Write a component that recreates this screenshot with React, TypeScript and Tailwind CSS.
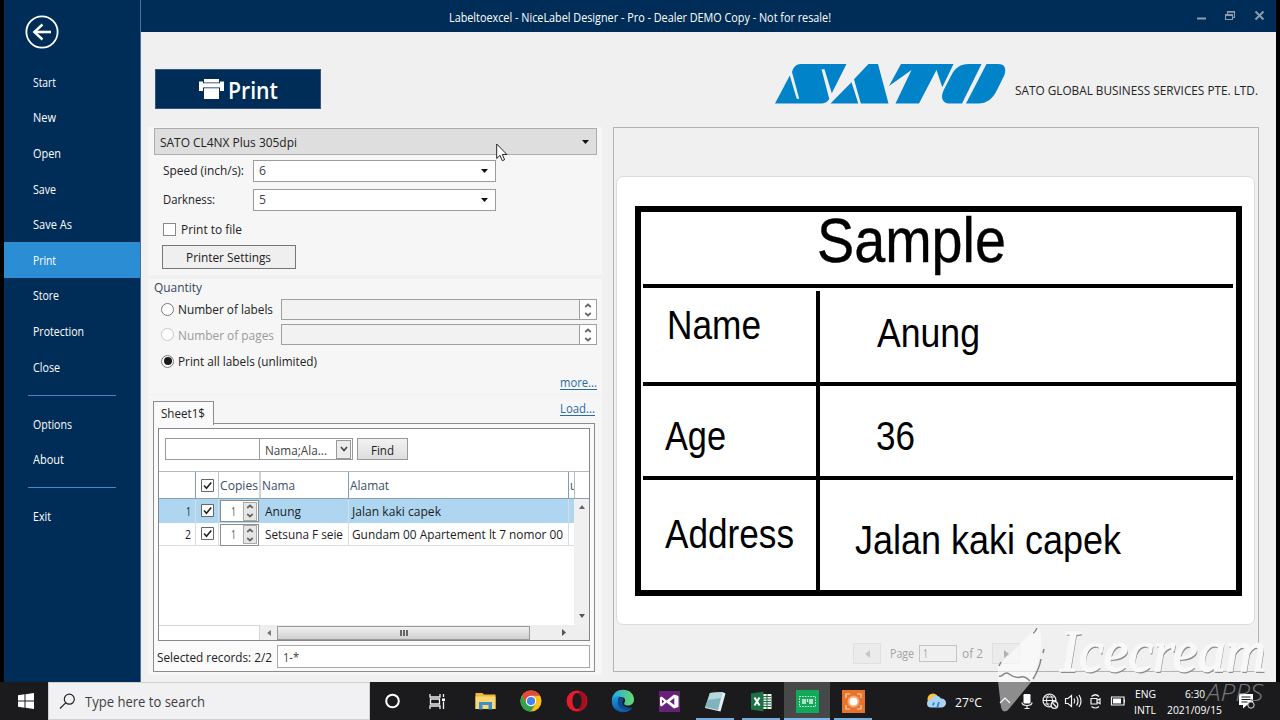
import { useLayoutEffect, useRef, useState } from "react";
import type { ReactNode } from "react";

type FitProps = { w: number; children: string; className?: string; underline?: boolean };

/* A single line of text condensed or widened to an exact width. */
function Fit({ w, children, className = "", underline = false }: FitProps) {
  const ref = useRef<HTMLSpanElement>(null);
  const [scale, setScale] = useState(1);
  useLayoutEffect(() => {
    const el = ref.current;
    if (!el) return;
    el.style.transform = "none";
    const next = w / el.getBoundingClientRect().width;
    el.style.transform = `scaleX(${next})`;
    setScale(next);
  }, [w, children]);
  return (
    <span className={`inline-block shrink-0 whitespace-nowrap ${className}`} style={{ width: w }}>
      <span
        ref={ref}
        className={`inline-block origin-left ${underline ? "underline underline-offset-2" : ""}`}
        style={{ transform: `scaleX(${scale})` }}
      >
        {children}
      </span>
    </span>
  );
}

function NavItem({ label, w, active = false }: { label: string; w: number; active?: boolean }) {
  return (
    <div
      className={`flex h-[35.6px] shrink-0 items-center pt-[1.500px] pl-[29px] text-[12px] text-white ${active ? "bg-[#2b8dd4]" : ""}`}
    >
      <Fit w={w}>{label}</Fit>
    </div>
  );
}

function Rule() {
  return <div className="mt-[10px] mb-[10.500px] ml-[24px] h-px w-[88px] shrink-0 bg-[#4a86c4]" />;
}

function Sidebar() {
  return (
    <nav className="ml-[4px] flex w-[136px] shrink-0 flex-col bg-[#002d57]">
      <div className="h-[64.3px] shrink-0 pt-[15px] pl-[21px]">
        <svg width="34" height="34" viewBox="0 0 34 34" fill="none" stroke="#fff">
          <circle cx="17" cy="17" r="15.6" strokeWidth="1.8" />
          <path d="M26 17H9.5" strokeWidth="2.6" />
          <path d="M17.5 9.5 9.3 17l8.2 7.5" strokeWidth="2.4" />
        </svg>
      </div>
      <NavItem label="Start" w={23} />
      <NavItem label="New" w={23} />
      <NavItem label="Open" w={28} />
      <NavItem label="Save" w={23} />
      <NavItem label="Save As" w={39} />
      <NavItem label="Print" w={23} active />
      <NavItem label="Store" w={26} />
      <NavItem label="Protection" w={51} />
      <NavItem label="Close" w={27} />
      <Rule />
      <NavItem label="Options" w={39} />
      <NavItem label="About" w={31} />
      <Rule />
      <NavItem label="Exit" w={18} />
    </nav>
  );
}

function TitleBar() {
  return (
    <header className="flex h-[32px] shrink-0 items-center bg-[#002d57] pt-[3px] pl-[308px] text-[12px] text-white">
      <Fit w={382}>Labeltoexcel - NiceLabel Designer - Pro - Dealer DEMO Copy - Not for resale!</Fit>
      <svg className="mt-[-4px] mr-[10px] ml-auto" width="70" height="14" viewBox="0 0 70 14" fill="none" stroke="#8b9db0">
        <path d="M1 9.5h9" strokeWidth="2" />
        <path d="M29.5 5.5h7v5h-7zM29.5 6.5h7M31.5 5V2.5h7v6h-2M31.5 3.2h7" strokeWidth="1.1" />
        <path d="m59.5 2.5 8 8m0-8-8 8" strokeWidth="1.9" />
      </svg>
    </header>
  );
}

function SatoLogo() {
  return (
    <svg width="231" height="40" viewBox="0 0 231 40" fill="#0083c8">
      <path d="M0 39.5 14.8 11.5 21.700 34.700h2.500L17 8l1-3C20 1.500 22.500 0 26 0H71.500L56.800 29.300 49.500 5.300h-3L54.300 35c-2 3-5 4.500-8 4.500z" />
      <path d="M55.500 39.500 76.500 18.300 83.300 39.500z" />
      <path d="m79 15.300 14.500-15.300H103l10.500 39.500H85.800z" />
      <path d="M114 22 126 0h52.500L167.300 23.300 161.500 6 144 39.500h-23.500L136.500 6z" />
      <path d="M206.500 0h-13c-8 0-13 3.500-17 11l-8 15.500c-3.500 7.500-.5 13 5.500 13h13z" />
      <path d="M211.500 0h12c7 0 8 6 5.500 12l-7 14c-4.500 9-10.500 13.500-18.500 13.500h-12.500z" />
    </svg>
  );
}

function Header() {
  return (
    <div className="flex h-[95px] shrink-0 items-start pl-[14px]">
      <div className="mt-[37px] flex h-[40px] w-[166px] items-center border border-[#34567e] bg-[#002d57] pl-[43px] text-[23.500px] font-semibold text-white">
        <svg width="25" height="20" viewBox="0 0 25 20" fill="#fff">
          <path d="M5 0h15v3.500H5z" />
          <path d="M0 2.500h4v2h17v-2h4V12h-4V8.200H4V12H0z" />
          <path d="M4 4.500h17v3.700H4zM5 9.200h15V20H5z" />
        </svg>
        <Fit w={50} className="mt-px ml-[4px]">Print</Fit>
      </div>
      <div className="mt-[32px] ml-auto mr-[18px] flex gap-[9px]">
        <SatoLogo />
        <Fit w={243} className="mt-[18px] text-[12px] leading-[18px] text-[#222]">
          SATO GLOBAL BUSINESS SERVICES PTE. LTD.
        </Fit>
      </div>
    </div>
  );
}

function Caret({ className = "" }: { className?: string }) {
  return (
    <svg className={`ml-auto ${className}`} width="7" height="4" viewBox="0 0 7 4" fill="#111">
      <path d="M0 0h7L3.500 4z" />
    </svg>
  );
}

function SettingRow({ label, w, value, className }: { label: string; w: number; value: string; className: string }) {
  return (
    <div className={`flex h-[21px] items-center pl-[9px] ${className}`}>
      <div className="flex w-[90px] pt-px">
        <Fit w={w}>{label}</Fit>
      </div>
      <div className="flex h-[22px] w-[243px] items-center border border-[#9c9c9c] bg-white pl-[5px] text-[#444]">
        <Fit w={7} className="mt-px">{value}</Fit>
        <Caret className="mr-[7px]" />
      </div>
    </div>
  );
}

function PrinterSection() {
  return (
    <section className="h-[148px] bg-[#f6f6f6] pt-px pl-[6px]">
      <div className="flex h-[27px] w-[443px] items-center border border-[#adadad] bg-[#dedede] pt-[2px] pl-[5px]">
        <Fit w={137}>SATO CL4NX Plus 305dpi</Fit>
        <Caret className="mr-[7px] mb-[2px]" />
      </div>
      <SettingRow className="mt-[5px]" label="Speed (inch/s):" w={81} value="6" />
      <SettingRow className="mt-[8px]" label="Darkness:" w={52} value="5" />
      <div className="mt-[12px] flex h-[14px] items-center pl-[9px]">
        <div className="mr-[5px] h-[13px] w-[13px] border border-[#8a8a8a] bg-white" />
        <Fit w={61} className="pt-[2px]">Print to file</Fit>
      </div>
      <div className="mt-[9px] ml-[8px] flex h-[24px] w-[134px] items-center border border-[#777] bg-[#efefef] pt-px pl-[23px]">
        <Fit w={85}>Printer Settings</Fit>
      </div>
    </section>
  );
}

function Radio({ on = false, dim = false }: { on?: boolean; dim?: boolean }) {
  return (
    <div
      className={`mr-[4px] ml-[7px] flex h-[13px] w-[13px] shrink-0 items-center justify-center rounded-full border bg-white ${dim ? "border-[#c8c8c8]" : "border-[#7a7a7a]"}`}
    >
      {on && <div className="h-[8px] w-[8px] rounded-full bg-[#1a1a1a]" />}
    </div>
  );
}

function SpinArrows() {
  return (
    <svg width="8" height="14" viewBox="0 0 8 14" fill="none" stroke="#666" strokeWidth="1.700">
      <path d="M1.200 4 4 1.500 6.800 4M1.200 10 4 12.500 6.800 10" />
    </svg>
  );
}

function QuantityField() {
  return (
    <div className="ml-auto flex h-[21px] w-[316px] border border-[#a0a0a0] bg-[#f2f2f2]">
      <div className="ml-auto flex w-[17px] items-center justify-center border-l border-[#a0a0a0] bg-white">
        <SpinArrows />
      </div>
    </div>
  );
}

function QuantitySection() {
  return (
    <section className="mt-[4px] h-[115px] bg-[#f6f6f6] pr-[5px] pl-[6px]">
      <div className="flex h-[16px] items-center pt-[2px] text-[#33475b]">
        <Fit w={48}>Quantity</Fit>
      </div>
      <div className="mt-[4px] flex h-[21px] items-center">
        <Radio />
        <Fit w={95} className="pt-px">Number of labels</Fit>
        <QuantityField />
      </div>
      <div className="mt-[4px] flex h-[21px] items-center text-[#9b9b9b]">
        <Radio dim />
        <Fit w={96} className="pt-[3px]">Number of pages</Fit>
        <QuantityField />
      </div>
      <div className="mt-[3px] flex h-[26px] items-center">
        <Radio on />
        <Fit w={139} className="pt-[2px]">Print all labels (unlimited)</Fit>
      </div>
      <div className="flex h-[17px] items-center justify-end text-[#2a6aa8]">
        <Fit w={37} underline>more...</Fit>
      </div>
    </section>
  );
}

function Check() {
  return (
    <svg width="13" height="13" viewBox="0 0 13 13" fill="none">
      <path d="M.5.500h12v12H.500z" fill="#fff" stroke="#666" />
      <path d="m3 6.500 2.500 2.700L10.200 3.500" stroke="#222" strokeWidth="1.600" />
    </svg>
  );
}

type RecordRowProps = { n: string; nw: number; name: string; nameW: number; address: string; addressW: number; selected?: boolean };

function RecordRow({ n, nw, name, nameW, address, addressW, selected = false }: RecordRowProps) {
  return (
    <div
      className={`flex h-[23.500px] w-[415px] text-[12.500px] text-[#1c1c1c] ${selected ? "bg-[#aed6f1] leading-[25px]" : "border-b border-[#dcdcdc] bg-white leading-[24px]"}`}
    >
      <div className="flex w-[37px] justify-end border-r border-[#d5dce2] pr-[4px]">
        <Fit w={nw}>{n}</Fit>
      </div>
      <div className="flex w-[23px] items-center justify-center border-r border-[#d5dce2]">
        <Check />
      </div>
      <div className="flex w-[42px] pt-px pl-px">
        <div className="flex h-[22px] w-[39px] items-center border border-[#8d8d8d] bg-white pl-[10px] text-[#555]">
          <Fit w={5}>1</Fit>
          <div className="mr-px ml-auto flex h-[19px] w-[14px] items-center justify-center border border-[#aaa] bg-[#e6e6e6]">
            <SpinArrows />
          </div>
        </div>
      </div>
      <div className="w-[88px] border-r border-[#d5dce2] pl-[4px]">
        <Fit w={nameW}>{name}</Fit>
      </div>
      <div className="w-[220px] border-r border-[#d5dce2] pl-[3px]">
        <Fit w={addressW}>{address}</Fit>
      </div>
    </div>
  );
}

function RecordsGrid() {
  return (
    <div className="h-[213px] w-[432px] border border-[#828790] bg-white">
      <div className="flex h-[42px] pt-[9px] pl-[6px]">
        <div className="h-[22px] w-[95px] border border-[#999]" />
        <div className="flex h-[22px] w-[93px] items-center border border-l-0 border-[#999] pr-px pl-[5px] text-[#444]">
          <Fit w={62} className="pt-[3px]">Nama;Ala...</Fit>
          <div className="ml-auto flex h-[19px] w-[15px] items-center justify-center border border-[#999] bg-[#ececec]">
            <svg width="8" height="6" viewBox="0 0 8 6" fill="none" stroke="#444" strokeWidth="1.600">
              <path d="m1 1 3 3.500L7 1" />
            </svg>
          </div>
        </div>
        <div className="ml-[4px] flex h-[22px] w-[51px] items-center border border-[#999] bg-linear-to-b from-[#f2f2f2] to-[#dedede] pt-[3px] pl-[13px]">
          <Fit w={23}>Find</Fit>
        </div>
      </div>
      <div className="flex h-[28px] border-t border-b border-t-[#b9b9b9] border-b-[#8aa0b4] text-[#3a5068]">
        <div className="w-[37px] border-r border-[#7f9db9]" />
        <div className="flex w-[23px] items-center justify-center border-r border-[#bcc6d0]">
          <Check />
        </div>
        <div className="flex w-[42px] items-center border-r-2 border-[#ccd2d8] pt-[2px] pl-px">
          <Fit w={38}>Copies</Fit>
        </div>
        <div className="flex w-[88px] items-center border-r border-[#7f9db9] pt-[2px] pl-px">
          <Fit w={33}>Nama</Fit>
        </div>
        <div className="flex w-[220px] items-center border-r border-[#7f9db9] pt-[2px] pl-px">
          <Fit w={39}>Alamat</Fit>
        </div>
        <div className="flex w-[6px] items-center overflow-hidden border-r border-[#b4bcc4] pt-[2px] pl-px">
          <Fit w={7}>u</Fit>
        </div>
      </div>
      <div className="flex h-[126px]">
        <div className="w-[415px]">
          <RecordRow n="1" nw={5} name="Anung" nameW={36} address="Jalan kaki capek" addressW={89} selected />
          <RecordRow n="2" nw={6} name="Setsuna F seie" nameW={78} address="Gundam 00 Apartement lt 7 nomor 00" addressW={211} />
        </div>
        <div className="flex w-[15px] flex-col items-center justify-between bg-[#f0f0f0] pt-[6px] pb-[7px]">
          <svg width="6" height="4" viewBox="0 0 6 4" fill="#666"><path d="M0 4h6L3 0z" /></svg>
          <svg width="6" height="4" viewBox="0 0 6 4" fill="#555"><path d="M0 0h6L3 4z" /></svg>
        </div>
      </div>
      <div className="flex h-[15px] items-center bg-[#eee] pr-[23px]">
        <div className="h-[15px] w-[101px] border-t border-r border-[#d6d6d6] bg-white" />
        <svg className="mr-[6px] ml-[7px]" width="4" height="6" viewBox="0 0 4 6" fill="#777"><path d="M4 0v6L0 3z" /></svg>
        <div className="flex h-[14px] w-[253px] items-center justify-center gap-px border border-[#9b9b9b] bg-linear-to-b from-[#f1f1f1] to-[#cfcfcf]">
          <div className="h-[6px] w-[2px] bg-[#666]" />
          <div className="h-[6px] w-[2px] bg-[#666]" />
          <div className="h-[6px] w-[2px] bg-[#666]" />
        </div>
        <svg className="ml-auto" width="4" height="7" viewBox="0 0 4 7" fill="#555"><path d="M0 0v7l4-3.500z" /></svg>
      </div>
    </div>
  );
}

function DataSection() {
  return (
    <section className="mt-px h-[280px] bg-[#f6f6f6] pt-[6px] pl-[5px]">
      <div className="flex h-[22px] w-[442px]">
        <div className="z-10 flex h-[24px] w-[61px] items-center border border-b-0 border-[#8c8c8c] bg-[#fafafa] pl-[7px]">
          <Fit w={44}>Sheet1$</Fit>
        </div>
        <Fit w={35} underline className="ml-auto mt-[-1px] leading-[18px] text-[#2a6aa8]">Load...</Fit>
      </div>
      <div className="h-[249px] w-[442px] border border-[#8c8c8c] bg-[#fafafa] p-[4px]">
        <RecordsGrid />
        <div className="mt-[4px] flex h-[23px] w-[432px] items-center">
          <Fit w={115} className="-ml-px pt-[2px]">Selected records: 2/2</Fit>
          <div className="ml-auto flex h-[23px] w-[313px] items-center border border-[#a8a8a8] bg-white pt-[2px] pl-[5px] text-[#444]">
            <Fit w={16}>1-*</Fit>
          </div>
        </div>
      </div>
    </section>
  );
}

/* The printed label: a free canvas whose objects sit at their designed positions. */
function LabelCanvas() {
  return (
    <div className="relative h-[449px] w-[639px] rounded-[7px] border border-[#dcdcdc] bg-white font-['Liberation_Sans',Arial,sans-serif] text-black">
      <div className="absolute top-[29px] left-[17.500px] h-[390px] w-[607px] border-6 border-black" />
      <div className="absolute top-[107px] left-[26px] h-[4px] w-[590px] bg-black" />
      <div className="absolute top-[205px] left-[26px] h-[4px] w-[595px] bg-black" />
      <div className="absolute top-[299px] left-[26px] h-[4px] w-[590px] bg-black" />
      <div className="absolute top-[114px] left-[199px] h-[302px] w-[4px] bg-black" />
      <Fit w={189} className="absolute top-[31px] left-[200px] text-[63px] leading-[64px] [-webkit-text-stroke:0.4px_#000]">Sample</Fit>
      <Fit w={94} className="absolute top-[128px] left-[49.500px] text-[40px] leading-[40px]">Name</Fit>
      <Fit w={103} className="absolute top-[136px] left-[259.500px] text-[40px] leading-[40px]">Anung</Fit>
      <Fit w={61} className="absolute top-[239px] left-[47.500px] text-[40px] leading-[40px]">Age</Fit>
      <Fit w={39} className="absolute top-[239px] left-[259px] text-[40px] leading-[40px]">36</Fit>
      <Fit w={129} className="absolute top-[337px] left-[47.500px] text-[40px] leading-[40px]">Address</Fit>
      <Fit w={266} className="absolute top-[343px] left-[237.500px] text-[40px] leading-[40px]">Jalan kaki capek</Fit>
    </div>
  );
}

function PagerButton({ children }: { children: ReactNode }) {
  return (
    <div className="flex h-[21px] w-[28px] items-center justify-center border border-[#e0e0e0] bg-[#ebebeb]">{children}</div>
  );
}

function Preview() {
  return (
    <section className="ml-[11px] flex h-[545px] w-[646px] flex-col border border-[#b4b4b4] pt-[48px] pl-[2px]">
      <LabelCanvas />
      <div className="mt-[18px] ml-[237px] flex h-[21px] items-center text-[12.500px] text-[#a3a3a3]">
        <PagerButton>
          <svg width="5" height="8" viewBox="0 0 5 8" fill="#c6c6c6"><path d="M5 0v8L0 4z" /></svg>
        </PagerButton>
        <Fit w={24} className="mt-px ml-[9px]">Page</Fit>
        <div className="mr-[5px] ml-[5px] flex h-[17px] w-[38px] items-center border border-[#c4c4c4] pl-[3px]">
          <Fit w={5}>1</Fit>
        </div>
        <Fit w={21} className="mt-px mr-[9px]">of 2</Fit>
        <PagerButton>
          <svg width="5" height="8" viewBox="0 0 5 8" fill="#b0b0b0"><path d="M0 0v8l5-4z" /></svg>
        </PagerButton>
      </div>
    </section>
  );
}

function Task({ children, open = false, active = false }: { children: ReactNode; open?: boolean; active?: boolean }) {
  return (
    <div className={`flex h-[38px] w-[46px] shrink-0 flex-col items-center justify-end ${active ? "bg-[#474948]" : ""}`}>
      <div className="flex h-[36px] items-center justify-center pt-[2px]">{children}</div>
      <div className={`h-[2px] ${active ? "w-[46px] bg-[#7fb8e6]" : open ? "w-[38px] bg-[#76addb]" : ""}`} />
    </div>
  );
}

function TaskIcons() {
  return (
    <div className="flex">
      <Task>
        <svg width="16" height="16" viewBox="0 0 16 16" fill="none"><circle cx="7.500" cy="8" r="6.300" stroke="#fff" strokeWidth="2" /></svg>
      </Task>
      <Task>
        <svg className="mr-[3px]" width="17" height="17" viewBox="0 0 17 17" fill="none" stroke="#f0f0f0" strokeWidth="1.300">
          <path d="M1 1v3h10V1M1 16v-3h10v3M1.500 6h9v5h-9zM14.500 1v3M14.500 8.500V16" />
          <path d="M13 5.500h3v2.500h-3z" fill="#fff" stroke="none" />
        </svg>
      </Task>
      <Task>
        <svg width="21" height="18" viewBox="0 0 21 18">
          <path d="M.5 1h7l1.500 1.500h11.500V17H.500z" fill="#f0b73b" />
          <path d="M.5 4.500h20V17H.500z" fill="#fbd771" />
          <path d="M4 17.500V10h13v7.500h-3.500V13h-6v4.500z" fill="#3f8fc9" />
        </svg>
      </Task>
      <Task>
        <svg width="22" height="22" viewBox="0 0 22 22">
          <circle cx="11" cy="11" r="10.500" fill="#fbc116" />
          <path d="M1.900 5.750A10.500 10.500 0 0 1 20.100 5.750H11L6.450 13.600z" fill="#e24a3b" />
          <path d="M1.900 5.750A10.500 10.500 0 0 0 11 21.500l4.550-7.900L11 16.200 6.450 13.600z" fill="#2fa350" />
          <circle cx="11" cy="11" r="5.200" fill="#fff" />
          <circle cx="11" cy="11" r="4.100" fill="#4285ee" />
        </svg>
      </Task>
      <Task>
        <svg width="22" height="22" viewBox="0 0 22 22">
          <circle cx="11" cy="11" r="10.500" fill="#e51c2e" />
          <path d="M13 .8a10.500 10.500 0 0 1 0 20.400z" fill="#a80f1e" />
          <ellipse cx="11" cy="11" rx="4.600" ry="8" fill="#1d1b1e" />
        </svg>
      </Task>
      <Task>
        <svg width="24" height="24" viewBox="0 0 24 24">
          <defs>
            <linearGradient id="edgeTop" x1="0" x2="1"><stop stopColor="#27a6e8" /><stop offset="1" stopColor="#65dc6a" /></linearGradient>
            <linearGradient id="edgeBottom" x1="0" x2="0" y1="0" y2="1"><stop stopColor="#1b9de0" /><stop offset="1" stopColor="#0c58a9" /></linearGradient>
          </defs>
          <path d="M1 10C2 4 6.500.800 12 .8 18.500.800 23 5 23 10.500c0 4-3 6-6.500 6-3 0-4-1.500-3-3 1.500-2 .5-5.500-3.500-5.500-4 0-8 2-9 6z" fill="url(#edgeTop)" />
          <path d="M.8 12C1.500 7.500 6 6.500 9 7c-3 3-3 11 3.500 13 3.500 1 7 .3 9-1.500-2 3-5.500 4.700-9.500 4.700C5.500 23.200.500 18.500.800 12z" fill="url(#edgeBottom)" />
          <path d="M9 8.500c-4 4-2.500 10.500 3.500 11.700 4 .8 7.500-.4 9-2-5 1.500-10.500-1-10-5 .2-1.500 1-2 1-3 0-1-1.500-2.500-3.500-1.700z" fill="#10498f" />
        </svg>
      </Task>
      <Task>
        <svg width="21" height="21" viewBox="0 0 21 21">
          <path d="M0 0h21v21H0z" fill="#68217a" />
          <path d="m1 6.500 1.700-1 4.800 4L15 3.500l4.500 1.500v11L15 17.500l-7.500-6-4.800 4-1.700-1zM3 8.500v4l2.200-2zM15.300 7l-4.600 3.500 4.600 3.500z" fill="#fff" fillRule="evenodd" />
        </svg>
      </Task>
      <Task open>
        <svg width="22" height="21" viewBox="0 0 22 21">
          <path d="M6 2 18.500 1l3 1.500-5 18L1 17z" fill="#e3eef0" />
          <path d="M6 2 18.500 1 14 19 1 16z" fill="#7fb4bd" />
          <path d="M6 2 18.500 1 17 7 4 9z" fill="#b2d8dc" />
        </svg>
      </Task>
      <Task open>
        <svg width="21" height="21" viewBox="0 0 21 21">
          <path d="M12 3h8.500v15H12z" fill="#f3f7f4" />
          <path d="M12 5.500h8M12 8h8M12 10.500h8M12 13h8M12 15.500h8M16 3v15" stroke="#1e7145" strokeWidth="1" />
          <path d="m0 2.500 12.500-2v20L0 18.500z" fill="#1e7145" />
          <path d="m3.500 6.500 5 8m0-8-5 8" stroke="#fff" strokeWidth="2" />
        </svg>
      </Task>
      <Task active>
        <svg width="23" height="23" viewBox="0 0 23 23" fill="none">
          <path d="M0 0h23v23H0z" fill="#13a95b" />
          <path d="M3.500 6.500h16v10h-16z" stroke="#d7f5e4" strokeDasharray="1.500 1.200" />
          <path d="M7 9v5M9 9v5M11.500 9v3M14 9v5M16 9v5" stroke="#fff" strokeWidth="1.300" />
        </svg>
      </Task>
      <Task open>
        <svg width="23" height="23" viewBox="0 0 23 23" fill="none">
          <path d="M0 0h23v23H0z" fill="#e8742c" />
          <path d="M4 8V4h4M15 4h4v4M19 15v4h-4M8 19H4v-4" stroke="#fbd0ae" strokeWidth="1.200" />
          <circle cx="11.500" cy="11.500" r="6" fill="#f5a673" />
          <circle cx="11.500" cy="11.500" r="4" fill="#fff" />
        </svg>
      </Task>
    </div>
  );
}

function Tray() {
  return (
    <div className="ml-auto flex items-center text-white">
      <svg width="21" height="18" viewBox="0 0 21 18">
        <circle cx="7" cy="7" r="5.500" fill="#fcc43c" />
        <path d="M5 15.500a4 4 0 0 1 0-8 5.500 5.500 0 0 1 10-1 4.500 4.500 0 0 1 1 9z" fill="#a9d3f5" />
        <path d="M8 10.500 7 13.500M13 10l-2 6" stroke="#2a83d4" strokeWidth="1.800" />
      </svg>
      <Fit w={27} className="mt-[2px] ml-[8px] text-[13.500px]">27°C</Fit>
      <svg className="ml-[17px]" width="126" height="18" viewBox="0 0 126 18" fill="none" stroke="#f3f3f3" strokeWidth="1.200">
        <path d="m1 11 5-5 5 5" />
        <rect x="24.500" y="2" width="7" height="9.500" rx="1.200" fill="#fff" stroke="none" />
        <path d="M23 10.500c0 4 10 4 10 0M28 13.500v3M25.500 16.500h5" />
        <circle cx="50.500" cy="8.500" r="6.500" />
        <path d="M44 8.500h13M50.500 2c-4 4-4 9 0 13M50.500 2c4 4 4 9 0 13M45.500 5h10M45.500 12h5" strokeWidth="1" />
        <circle cx="55.500" cy="13" r="3.300" fill="#1b1b1d" />
        <path d="m53.500 11 4 4" />
        <path d="M66.500 6.500h2.500l3.500-3v11l-3.500-3h-2.500zM75 6.500q1.500 2.500 0 5M77.500 4.500q3 4.500 0 9M80 3q4 6 0 12" />
        <path d="M92 6.500h6v5.500h-6zM98 8.500l3-1.800v5l-3-1.700M92.500 4.500q4-3.500 7.500 0M92.500 14.500q4 3 7.500 0" />
        <path d="M112.500 5h12.500v8h-12.500zM125.500 7.500v3" />
        <path d="M114 6.500h8v5h-8z" fill="#fff" stroke="none" />
      </svg>
      <div className="mt-px ml-[9px] flex flex-col items-center text-[11.500px] leading-[16px]">
        <Fit w={21}>ENG</Fit>
        <Fit w={22}>INTL</Fit>
      </div>
      <div className="mt-px ml-[11px] flex w-[55px] flex-col items-center text-[11.500px] leading-[16px]">
        <Fit w={20}>6:30</Fit>
        <Fit w={55}>2021/09/15</Fit>
      </div>
      <svg className="mr-[25px] ml-[16px]" width="17" height="18" viewBox="0 0 17 18">
        <path d="M1 2h14v11H9l-4 3.500V13H1z" fill="#fff" />
        <path d="M3.500 5h9M3.500 7.500h9M3.500 10h6" stroke="#1b1b1d" />
        <circle cx="13" cy="13" r="3.200" fill="#1b1b1d" stroke="#ddd" />
      </svg>
    </div>
  );
}

function Taskbar() {
  return (
    <footer className="flex h-[38px] shrink-0 bg-[#1b1b1d] pl-[4px]">
      <div className="flex w-[44px] items-center pl-[14px]">
        <svg width="16" height="16" viewBox="0 0 16 16" fill="#fff">
          <path d="m0 2.200 6.500-.9v6.200H0zM7.500 1.200 16 0v7.500H7.500zM0 8.500h6.500v6.200l-6.500-.9zM7.500 8.500H16V16l-8.500-1.200z" />
        </svg>
      </div>
      <div className="flex h-[38px] w-[322px] items-center border border-[#cfcfd2] bg-[#f1f1f3] pl-[10px] text-[#3f3f3f]">
        <svg width="17" height="17" viewBox="0 0 17 17" fill="none" stroke="#222" strokeWidth="1.200">
          <circle cx="10.300" cy="6.200" r="5" />
          <path d="M6.700 9.800 1 15.500" />
        </svg>
        <Fit w={120} className="mt-[2px] ml-[9px] text-[14px]">Type here to search</Fit>
      </div>
      <TaskIcons />
      <Tray />
    </footer>
  );
}

function Cursor() {
  return (
    <svg className="absolute top-[143px] left-[496px]" width="13" height="20" viewBox="0 0 13 20">
      <path d="M.7 1v14.500l3.300-3.100 2.300 5.300 2.300-1-2.300-5.200h4.600z" fill="#fff" stroke="#222" />
    </svg>
  );
}

function Watermark() {
  return (
    <div className="pointer-events-none absolute top-[622px] left-[990px] h-[92px] w-[284px]">
      <svg className="absolute" width="60" height="92" viewBox="0 0 60 92" fill="none">
        <path d="M8 44 48 4c6 12 4 26-6 55H8z" fill="#fff" fillOpacity=".55" />
        <path d="M8 59h34L18 88c-4 3-6 1-7-3z" fill="#fff" fillOpacity=".5" />
        <path d="M9 54c4 2 5-6 10-2s8 4 12 3 7 2 9 4M43 57c5-8 7-14 8-20M53 31l1-4M47 6c-1 2-3 5-4 5M9 44l2-4" stroke="#858585" strokeWidth="1.500" />
      </svg>
      <Fit
        w={206}
        className="absolute top-[-1px] left-[70px] font-['Liberation_Serif','Times_New_Roman',serif] text-[60px] leading-[60px] italic text-[#f8f8f8] [-webkit-text-stroke:1.5px_#f8f8f8] [text-shadow:1px_2px_0_#8c8c8c]"
      >
        Icecream
      </Fit>
      <Fit w={57} className="absolute top-[58px] left-[216px] text-[24px] leading-[24px] font-light italic text-[#77777a]">
        APPS
      </Fit>
    </div>
  );
}

export default function App() {
  return (
    <div className="relative flex h-[720px] w-[1280px] flex-col overflow-hidden bg-black font-['Open_Sans','Noto_Sans',sans-serif] text-[12.500px] leading-[16px] text-[#222]">
      <div className="flex h-[682px] shrink-0">
        <Sidebar />
        <main className="mr-[4px] flex flex-1 flex-col border-l border-[#4d6f98] bg-[#f0f0f0]">
          <TitleBar />
          <Header />
          <div className="flex h-[545px] pl-[7px]">
            <div className="w-[454px]">
              <PrinterSection />
              <QuantitySection />
              <DataSection />
            </div>
            <Preview />
          </div>
        </main>
      </div>
      <Taskbar />
      <Cursor />
      <Watermark />
    </div>
  );
}
